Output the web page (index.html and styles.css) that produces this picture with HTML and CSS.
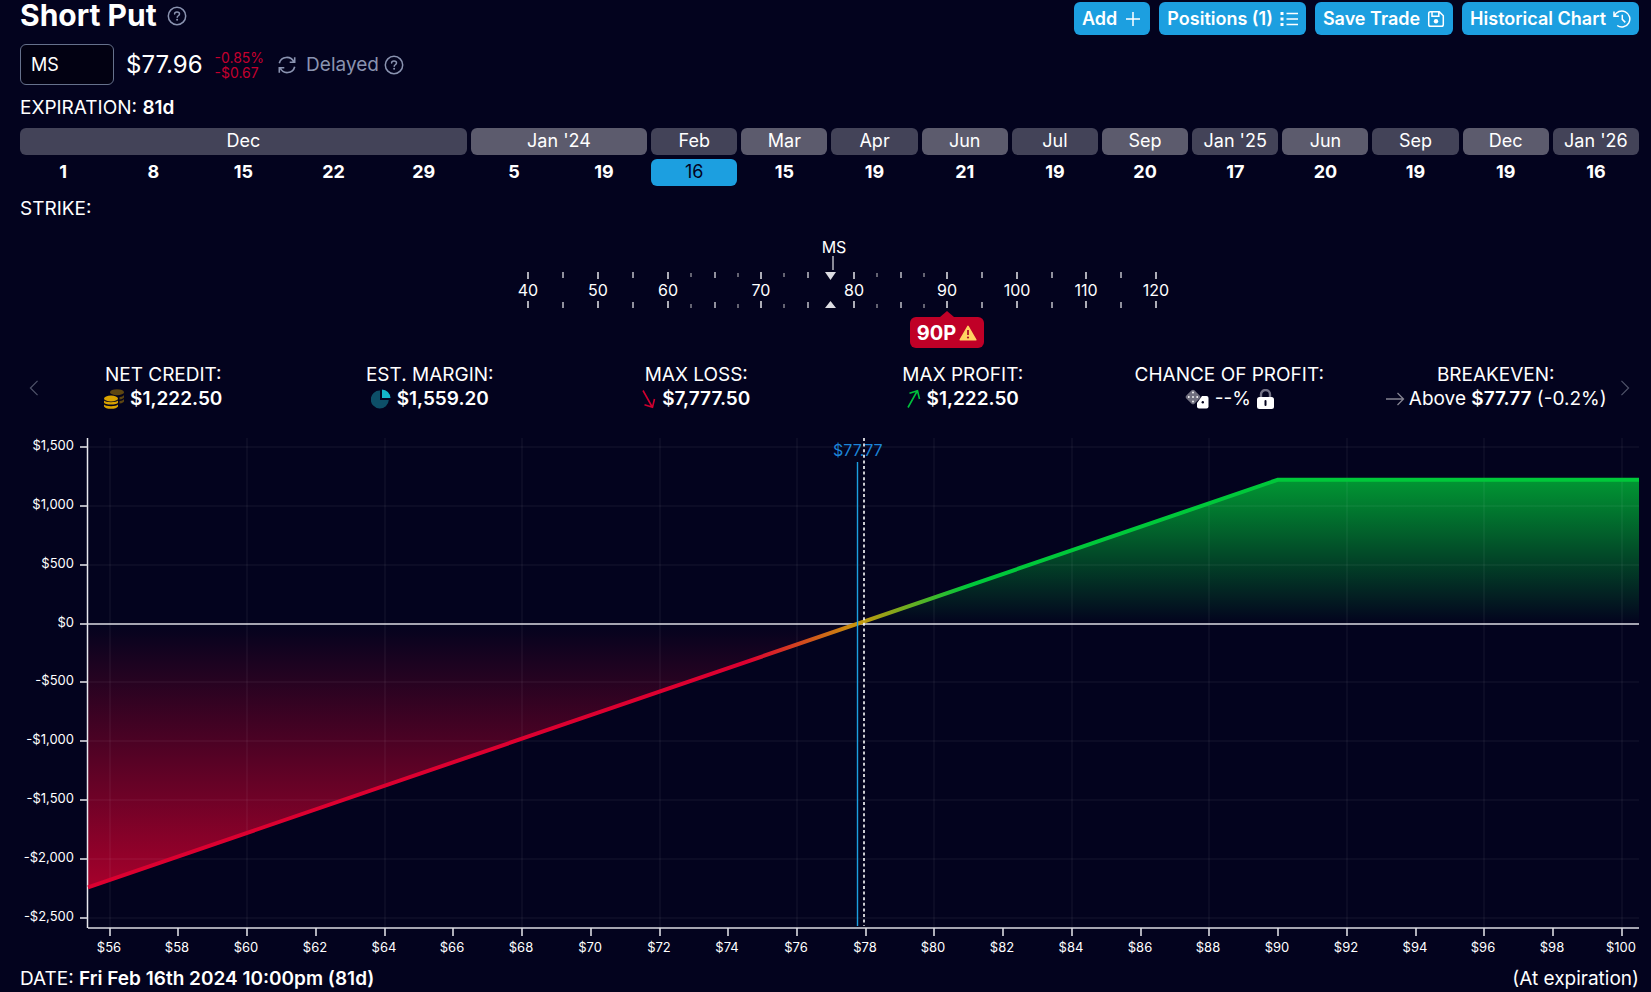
FILE: index.html
```html
<!DOCTYPE html>
<html lang="en">
<head>
<meta charset="utf-8">
<meta name="viewport" content="width=device-width, initial-scale=1">
<title>Short Put</title>
<link rel="stylesheet" href="styles.css">
</head>
<body>
<svg class="sprite" aria-hidden="true">
  <symbol id="i-help" viewBox="0 0 20 20"><circle cx="10" cy="10" r="8.7" fill="none" stroke="currentColor" stroke-width="1.5"/><path d="M7.6 8.1c0-1.3 1-2.1 2.4-2.1s2.5.9 2.5 2.1c0 1.6-2.3 1.7-2.3 3.2" fill="none" stroke="currentColor" stroke-width="1.5" stroke-linecap="round"/><circle cx="10.1" cy="13.8" r="1"/></symbol>
  <symbol id="i-left" viewBox="0 0 10 18"><path d="M9 1 1 9l8 8" fill="none" stroke="currentColor" stroke-width="1.4"/></symbol>
</svg>
<main class="page">
  <header class="top">
    <div class="heading">
      <h1 class="title">Short Put</h1>
      <button class="help" type="button" aria-label="About this strategy"><svg class="help-icon"><use href="#i-help"/></svg></button>
    </div>
    <nav class="actions" aria-label="Trade actions">
      <button class="action" type="button">Add
        <svg class="action-icon" viewBox="0 0 18 18"><path d="M9 2v14M2 9h14"/></svg></button>
      <button class="action" type="button">Positions (1)
        <svg class="action-icon" viewBox="0 0 18 18"><path d="M6.500 3.500H18M6.500 9H18M6.500 14.500H18"/><path d="M.5 3.500h3M.5 9h3M.5 14.500h3" stroke-width="2.800"/></svg></button>
      <button class="action" type="button">Save Trade
        <svg class="action-icon" viewBox="0 0 18 18"><path d="M3.500 1.700h8.800l4 4v8.800a1.800 1.800 0 0 1-1.800 1.800h-11a1.800 1.800 0 0 1-1.800-1.800v-11a1.800 1.800 0 0 1 1.800-1.800zM5 1.700v4.600h6.800V1.700"/><circle cx="9" cy="11.300" r="2.200" class="solid"/></svg></button>
      <button class="action" type="button">Historical Chart
        <svg class="action-icon" viewBox="0 0 18 18"><path d="M1 1.500v4.800h4.800M1.400 6A8 8 0 1 1 4.200 15.500M9.300 4.800v4.600l3 3"/></svg></button>
    </nav>
  </header>

  <section class="quote">
    <input class="ticker" type="text" value="MS" aria-label="Symbol">
    <span class="price">$77.96</span>
    <span class="change"><span>-0.85%</span><span>-$0.67</span></span>
    <button class="delay" type="button">
      <svg class="refresh" viewBox="0 0 18 18"><path d="M1.300 7.200A7.700 7.700 0 0 1 15.800 6M16.700 1.200v5h-5M16.700 10.800A7.700 7.700 0 0 1 2.200 12M1.300 16.800v-5h5"/></svg>
      Delayed
      <svg class="help-icon"><use href="#i-help"/></svg>
    </button>
  </section>

  <section class="expiry" aria-label="Expiration">
    <h2 class="label">EXPIRATION: <b>81d</b></h2>
    <div class="calendar">
      <span class="month m5">Dec</span><span class="month m2 alt">Jan '24</span><span class="month">Feb</span><span class="month alt">Mar</span><span class="month">Apr</span><span class="month alt">Jun</span><span class="month">Jul</span><span class="month alt">Sep</span><span class="month">Jan '25</span><span class="month alt">Jun</span><span class="month">Sep</span><span class="month alt">Dec</span><span class="month">Jan '26</span>
      <button class="day" type="button">1</button><button class="day" type="button">8</button><button class="day" type="button">15</button><button class="day" type="button">22</button><button class="day" type="button">29</button><button class="day" type="button">5</button><button class="day" type="button">19</button><button class="day selected" type="button" aria-pressed="true">16</button><button class="day" type="button">15</button><button class="day" type="button">19</button><button class="day" type="button">21</button><button class="day" type="button">19</button><button class="day" type="button">20</button><button class="day" type="button">17</button><button class="day" type="button">20</button><button class="day" type="button">19</button><button class="day" type="button">19</button><button class="day" type="button">16</button>
    </div>
  </section>

  <section class="strike" aria-label="Strike">
    <h2 class="label">STRIKE:</h2>
    <div class="ruler">
      <svg class="ruler-scale" id="ruler" viewBox="0 0 699 90"></svg>
      <button class="leg" type="button">90P
        <svg class="warn" viewBox="0 0 18 16"><path d="M9 1.400 16.800 14.800H1.200z" fill="#ffd263" stroke="#ffd263" stroke-width="1.600" stroke-linejoin="round"/><path d="M9 5v5" stroke="#b0102c" stroke-width="1.800"/><circle cx="9" cy="12.500" r="1.100" fill="#b0102c"/></svg>
      </button>
    </div>
  </section>

  <section class="stats" aria-label="Summary">
    <button class="step prev" type="button" aria-label="Previous"><svg class="chevron"><use href="#i-left"/></svg></button>
    <div class="stat"><span>NET CREDIT:</span>
      <span class="value"><svg class="stat-icon" viewBox="0 0 20 20"><g fill="#5d4511"><ellipse cx="13" cy="3.200" rx="7" ry="3"/><path d="M15.500 8c2.500-.3 4.500-1.200 4.500-2.300v2.500c0 1-1.500 1.900-4.500 2.300zM15.500 12c2.500-.3 4.500-1.200 4.500-2.300v2.500c0 1-1.500 1.900-4.500 2.300z"/></g><g fill="#d9a300"><ellipse cx="7" cy="9.500" rx="7" ry="3"/><path d="M0 11.600c1.500 2.300 12.500 2.300 14 0v1.800c-.7 2.800-13.300 2.800-14 0zM0 15.600c1.500 2.300 12.500 2.300 14 0v1.600c-.7 3.400-13.300 3.400-14 0z"/></g></svg><b>$1,222.50</b></span></div>
    <div class="stat"><span>EST. MARGIN:</span>
      <span class="value"><svg class="stat-icon" viewBox="0 0 20 20"><path d="M9 1.500V11h8.800A9 9 0 1 1 9 1.500z" fill="#0d4f68"/><path d="M11 .5A9 9 0 0 1 19.500 9H11z" fill="#14b5c9"/></svg><b>$1,559.20</b></span></div>
    <div class="stat"><span>MAX LOSS:</span>
      <span class="value"><svg class="stat-icon slim" viewBox="0 0 14 20"><path d="M1 1.500l9.500 17M2.500 15.800l8 2.500 2-8.300" fill="none" stroke="#d0002f" stroke-width="1.600"/></svg><b>$7,777.50</b></span></div>
    <div class="stat"><span>MAX PROFIT:</span>
      <span class="value"><svg class="stat-icon slim" viewBox="0 0 14 20"><path d="M1 18.500l9.500-17M2.500 4.200l8-2.500 2 8.300" fill="none" stroke="#00c23c" stroke-width="1.600"/></svg><b>$1,222.50</b></span></div>
    <div class="stat"><span>CHANCE OF PROFIT:</span>
      <span class="value"><svg class="stat-icon wide" viewBox="0 0 24 20"><rect x="2.300" y="2.300" width="11.400" height="11.400" rx="2" transform="rotate(45 8 8)" fill="#6f6e7e"/><g fill="#fff"><circle cx="8" cy="3.500" r=".9"/><circle cx="3.800" cy="8" r=".9"/><circle cx="8" cy="8" r=".9"/><circle cx="12.200" cy="8" r=".9"/><circle cx="8" cy="12.500" r=".9"/><path d="M17 7h4.500A2 2 0 0 1 23.500 9v8.500a2 2 0 0 1-2 2H14a2 2 0 0 1-2-2V14z"/></g><circle cx="17.800" cy="13.300" r="1.200" fill="#03031e"/></svg><span class="odds">--%</span><svg class="lock" viewBox="0 0 17 20"><path d="M4 9V5.500a4.500 4.500 0 0 1 9 0V9" fill="none" stroke="#737285" stroke-width="2.400"/><rect y="8" width="17" height="12" rx="2.500" fill="#fff"/><path d="M8.500 12v4" stroke="#03031e" stroke-width="2" stroke-linecap="round"/></svg></span></div>
    <div class="stat"><span>BREAKEVEN:</span>
      <span class="value tight"><svg class="stat-icon" viewBox="0 0 20 20"><path d="M1 10h17.500M12.500 4l6 6-6 6" fill="none" stroke="#858491" stroke-width="1.300"/></svg><span>Above <b>$77.77</b> (-0.2%)</span></span></div>
    <button class="step next" type="button" aria-label="Next"><svg class="chevron flip"><use href="#i-left"/></svg></button>
  </section>

  <svg class="chart" id="chart" role="img" aria-label="Profit and loss at expiration"></svg>

  <footer class="foot">
    <span>DATE: <b>Fri Feb 16th 2024 10:00pm (81d)</b></span>
    <span>(At expiration)</span>
  </footer>
</main>
<script src="chart.js"></script>
</body>
</html>
```
FILE: styles.css
```css
* { box-sizing: border-box; }

body {
  margin: 0;
  background: #03031e;
  color: #fff;
  font-family: Inter, "Liberation Sans", sans-serif;
  font-size: 18px;
  line-height: 24px;
}

button {
  font: inherit;
  color: inherit;
  background: none;
  border: 0;
  padding: 0;
  cursor: pointer;
}

b { font-weight: 600; }
h1, h2 { margin: 0; }
.sprite { position: absolute; width: 0; height: 0; }

.page { padding: 0 12px 0 20px; }

.top { display: flex; justify-content: space-between; height: 36px; }
.heading { display: flex; align-items: center; gap: 10px; height: 31px; }
.title { font-size: 30px; line-height: 31px; font-weight: 700; }
.help { display: flex; color: #8a93b0; }
.help-icon { width: 20px; height: 20px; fill: currentColor; }

.actions { display: flex; gap: 9px; padding-top: 2px; }
.action {
  display: flex;
  align-items: center;
  gap: 7px;
  height: 33px;
  padding: 0 8px;
  border-radius: 6px;
  background: #1c9fe0;
  font-weight: 600;
  white-space: nowrap;
}
.action-icon { width: 18px; height: 18px; fill: none; stroke: #fff; stroke-width: 1.5; }
.solid { fill: #fff; stroke: none; }

.quote { display: flex; align-items: center; height: 41px; margin-top: 8px; }
.ticker {
  width: 94px;
  height: 41px;
  padding: 0 10px;
  border: 1px solid #66718c;
  border-radius: 6px;
  background: #020112;
  color: #fff;
  font: inherit;
}
.price { margin-left: 12px; font-size: 24px; }
.change { display: flex; flex-direction: column; margin-left: 12px; font-size: 14px; line-height: 15px; color: #c4002e; }
.delay { display: flex; align-items: center; gap: 5px; margin-left: 14px; font-size: 19px; line-height: 22px; color: #8a93b0; }
.refresh { width: 18px; height: 18px; margin-right: 5px; fill: none; stroke: currentColor; stroke-width: 1.6; }

.label { font-size: 19px; line-height: 24px; font-weight: 400; }
.expiry { margin-top: 11px; }
.calendar { display: grid; grid-template-columns: repeat(18, minmax(0, 1fr)); gap: 4px; margin-top: 8px; }
.month, .day { height: 27px; line-height: 25px; border-radius: 6px; text-align: center; }
.month { background: #434358; }
.month.alt { background: #5c5b6d; }
.m5 { grid-column: span 5; }
.m2 { grid-column: span 2; }
.day { padding-bottom: 2px; font-weight: 700; }
.selected { background: #1c9fe0; color: #03031e; font-weight: 400; }

.strike { margin-top: 11px; }
.ruler { position: relative; width: 699px; height: 127px; margin: 15px auto 0; }
.ruler-scale { display: block; width: 699px; height: 90px; fill: #fff; font-size: 16px; text-anchor: middle; }
.leg {
  position: absolute;
  left: 430px;
  top: 81px;
  display: flex;
  align-items: center;
  justify-content: center;
  gap: 3px;
  width: 74px;
  height: 31px;
  border-radius: 6px;
  background: #c00027;
  font-size: 20px;
  font-weight: 700;
}
.leg::before {
  content: "";
  position: absolute;
  left: 30px;
  top: -6px;
  border: solid transparent;
  border-width: 0 7px 6px;
  border-bottom-color: #c00027;
}
.warn { width: 18px; height: 16px; }

.stats { position: relative; display: grid; grid-template-columns: repeat(6, minmax(0, 1fr)); padding: 0 10px; font-size: 19px; }
.stat { display: flex; flex-direction: column; align-items: center; white-space: nowrap; }
.value { display: flex; align-items: center; gap: 6px; }
.value.tight { gap: 4px; }
.stat-icon { width: 20px; height: 20px; }
.slim { width: 14px; }
.wide { width: 24px; }
.lock { width: 17px; height: 20px; }
.step { position: absolute; top: 17px; display: flex; color: #4e5268; }
.prev { left: 9px; }
.next { right: 9px; }
.chevron { width: 10px; height: 16px; }
.flip { transform: scaleX(-1); }

.chart { display: block; width: 100%; height: 530px; margin-top: 18px; font-size: 13px; fill: #fff; }
.grid { stroke: #ffffff; stroke-opacity: .04; stroke-width: 2; }
.axis { stroke: #e8e8ee; stroke-width: 1.5; }
.zero { stroke: #dcdce2; stroke-width: 1.6; }
.spot { stroke: #fff; stroke-width: 1.6; stroke-dasharray: 3 2.6; }
.even { stroke: #1c9fe0; stroke-width: 1.4; }
.even-label { fill: #1c84d8; font-size: 16px; }
.payoff { fill: none; stroke: url(#line); stroke-width: 4; stroke-linejoin: round; }

.foot { display: flex; justify-content: space-between; margin-top: 8px; font-size: 19px; }
```
FILE: chart.js
```js
const put = (root, markup) => { root.innerHTML = markup; };

function drawRuler() {
  const x = s => s <= 60 ? 48.5 + (s - 40) * 7 : s <= 90 ? 188.5 + (s - 60) * 9.3 : 467.5 + (s - 90) * 6.97;
  const strikes = [40, 45, 50, 55, 60, 62.5, 65, 67.5, 70, 72.5, 75, 80, 82.5, 85, 87.5, 90, 95, 100, 105, 110, 115, 120];
  let out = '';
  for (const s of strikes) {
    const px = Math.floor(x(s));
    const h = s % 10 === 0 ? 7 : s % 5 === 0 ? 6 : 4;
    const tone = s % 10 === 0 ? '#d8d8de' : s % 5 === 0 ? '#b4b4be' : '#7d7c88';
    out += `<path d="M${px} ${s % 5 ? 37 : 36}v${h}M${px} ${72 - h}v${h}" stroke="${tone}" stroke-width="1.6"/>`;
    if (s % 10 === 0) out += `<text x="${px}" y="60">${s}</text>`;
  }
  out += '<text x="354" y="17">MS</text><path d="M353 20v14" stroke="#b9b9c2" stroke-width="1.5"/>';
  out += '<path d="M345 36h11l-5.500 8zM345 72h11l-5.500-7z" fill="#dddde2"/>';
  put(document.getElementById('ruler'), out);
}

function drawChart() {
  const svg = document.getElementById('chart');
  const width = svg.clientWidth;
  const left = 68, top = 9, bottom = 499, zero = 194.6;
  const unit = (width - left) / 45.13;
  const x = p => left + (p - 55.37) * unit;
  const y = v => zero - v * 0.11775;
  const snap = n => Math.round(n);
  let grid = '', ticks = '', labels = '';
  for (let v = 1500; v >= -2500; v -= 500) {
    const py = snap(y(v));
    if (v) grid += `<path class="grid" d="M${left} ${py}H${width}"/>`;
    ticks += `<path class="zero" d="M${left - 8} ${py}h8"/>`;
    const text = (v < 0 ? '-$' : '$') + Math.abs(v).toLocaleString('en-US');
    labels += `<text x="54" y="${py + 3}" text-anchor="end">${text}</text>`;
  }
  for (let p = 56; p <= 100; p += 2) {
    const px = snap(x(p));
    if (p % 4 === 0) grid += `<path class="grid" d="M${px} ${top}V${bottom}"/>`;
    ticks += `<path class="zero" d="M${px} ${bottom}v8"/>`;
    labels += `<text x="${px - 1}" y="523" text-anchor="middle">$${p}</text>`;
  }
  const be = x(77.77), knee = x(90), max = y(1222.5), low = y(-2240);
  put(svg, `
    <defs>
      <linearGradient id="line" gradientUnits="userSpaceOnUse" x1="${be - 110}" x2="${be + 110}" y1="0" y2="0">
        <stop offset="0" stop-color="#dc0030"/><stop offset=".5" stop-color="#c8960c"/><stop offset="1" stop-color="#00c83a"/>
      </linearGradient>
      <linearGradient id="gain" x1="0" x2="0" y1="0" y2="1"><stop offset="0" stop-color="#00c83a" stop-opacity=".75"/><stop offset="1" stop-color="#00c83a" stop-opacity="0"/></linearGradient>
      <linearGradient id="loss" x1="0" x2="0" y1="0" y2="1"><stop offset="0" stop-color="#dc0030" stop-opacity="0"/><stop offset="1" stop-color="#dc0030" stop-opacity=".75"/></linearGradient>
    </defs>
    <path d="M${be} ${zero}L${knee} ${max}H${width}V${zero}z" fill="url(#gain)"/>
    <path d="M${left} ${zero}H${be}L${left} ${low}z" fill="url(#loss)"/>
    ${grid}
    <path class="zero" d="M${left} ${snap(zero)}H${width}M${left} ${bottom}H${width}"/>
    <path class="axis" d="M${left - 0.5} ${top}V${bottom}"/>
    ${ticks}
    <path class="payoff" d="M${left} ${low}L${knee} ${max}H${width}"/>
    <path class="even" d="M${Math.floor(be) + 0.5} 33V${bottom - 2}"/>
    <text class="even-label" x="${be}" y="27" text-anchor="middle">$77.77</text>
    <path class="spot" d="M${snap(x(77.96))} ${top}V${bottom - 2}"/>
    ${labels}`);
}

drawRuler();
drawChart();
window.addEventListener('resize', drawChart);
```
